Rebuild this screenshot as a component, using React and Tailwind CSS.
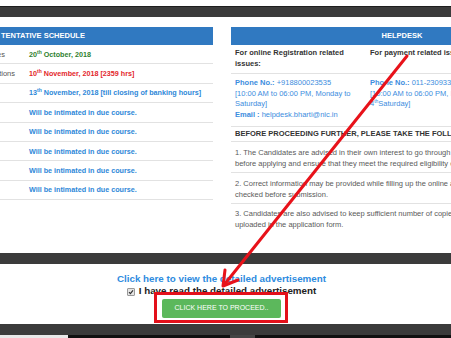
import React from "react";

const font = "font-['Liberation_Sans',Arial,sans-serif]";

function Th({ children }) {
  return <sup className="text-[5px] top-[-3px]">{children}</sup>;
}

const leftRows = [
  { label: "Start of Registration of Candidates", pr: "pr-[24px]", value: <span className="text-[#2f7f2f]">20<Th>th</Th> October, 2018</span> },
  { label: "Closure of Registration of Applications", pr: "pr-[14px]", value: <span className="text-[#e3262b]">10<Th>th</Th> November, 2018 [2359 hrs]</span> },
  { label: "", pr: "", value: <span className="text-[#2d87d8]">13<Th>th</Th> November, 2018 [till closing of banking hours]</span> },
  { label: "", pr: "", value: <span className="text-[#2d87d8]">Will be intimated in due course.</span> },
  { label: "", pr: "", value: <span className="text-[#2d87d8]">Will be intimated in due course.</span> },
  { label: "", pr: "", value: <span className="text-[#2d87d8]">Will be intimated in due course.</span> },
  { label: "", pr: "", value: <span className="text-[#2d87d8]">Will be intimated in due course.</span> },
  { label: "", pr: "", value: <span className="text-[#2d87d8]">Will be intimated in due course.</span> },
];

function LeftTable() {
  return (
    <div className="w-[213px] shrink-0">
      <div className="h-[18px] bg-[#3079c1] flex items-center pl-[1px] text-white font-bold text-[7.5px] whitespace-nowrap">
        TENTATIVE SCHEDULE
      </div>
      {leftRows.map((r, i) => (
        <div key={i} className="h-[19.4px] flex items-center border-b border-[#e2e2e2]">
          <div className="w-[29px] shrink-0 overflow-hidden">
            <div className={`flex justify-end whitespace-nowrap text-[7.5px] text-[#555] ${r.pr}`}>{r.label}</div>
          </div>
          <div className="text-[7.2px] font-bold whitespace-nowrap leading-none">{r.value}</div>
        </div>
      ))}
    </div>
  );
}

function RightTable() {
  return (
    <div className="w-[342px] shrink-0 text-[7.5px] leading-[10.6px]">
      <div className="h-[18px] bg-[#3079c1] flex items-center justify-center text-white font-bold">HELPDESK</div>
      <div className="h-[29px] flex border-b border-[#e2e2e2] font-bold text-[#333] pt-[3px]">
        <div className="w-[135px] px-[4px]">For online Registration related issues:</div>
        <div className="flex-1 px-[4px] whitespace-nowrap">For payment related issues:</div>
      </div>
      <div className="h-[53px] flex border-b border-[#e2e2e2] text-[#3c8dde] pt-[4px]">
        <div className="w-[135px] px-[4px] whitespace-nowrap">
          <b>Phone No.:</b> +918800023535
          <br />[10:00 AM to 06:00 PM, Monday to
          <br />Saturday]
          <br /><b>Email :</b> helpdesk.bharti@nic.in
        </div>
        <div className="flex-1 px-[4px] whitespace-nowrap">
          <b>Phone No.:</b> 011-23093309
          <br />[10:00 AM to 06:00 PM, Monday to Friday except 2nd &amp;
          <br />4<sup className="text-[5px] top-[-3px]">th</sup>Saturday]
        </div>
      </div>
      <div className="h-[15px] flex items-center border-b border-[#e2e2e2] px-[4px] font-bold text-[#333] whitespace-nowrap">
        BEFORE PROCEEDING FURTHER, PLEASE TAKE THE FOLLOWING PRECAUTIONS
      </div>
      <div className="h-[31px] border-b border-[#e2e2e2] px-[4px] pt-[6px] text-[#5a5a5a] whitespace-nowrap">
        1. The Candidates are advised in their own interest to go through the detailed advertisement carefully
        <br />before applying and ensure that they meet the required eligibility criteria.
      </div>
      <div className="h-[31px] border-b border-[#e2e2e2] px-[4px] pt-[6px] text-[#5a5a5a] whitespace-nowrap">
        2. Correct information may be provided while filling up the online application form and it should be
        <br />checked before submission.
      </div>
      <div className="h-[32px] px-[4px] pt-[5px] text-[#5a5a5a] whitespace-nowrap">
        3. Candidates are also advised to keep sufficient number of copies of the photograph
        <br />uploaded in the application form.
      </div>
    </div>
  );
}

export default function App() {
  return (
    <div className={`relative w-[451px] h-[338px] overflow-hidden bg-white ${font}`}>
      <div className="h-[6px] bg-white" />
      <div className="h-[11px] bg-[#3b3b3b] border-t border-[#1e1e1e]" />
      <div className="h-[236px] pt-[10px] flex gap-[18px]">
        <LeftTable />
        <RightTable />
      </div>
      <div className="h-[11px] bg-[#3b3b3b]" />
      <div className="h-[60px] flex flex-col items-center pr-[8px] pt-[8px]">
        <div className="text-[9.8px] leading-[13px] font-bold text-[#2d8be0] whitespace-nowrap">
          Click here to view the detailed advertisement
        </div>
        <div className="flex items-center gap-[4px] h-[13px] text-[9.8px] font-bold text-[#222] whitespace-nowrap">
          <span className="w-[8px] h-[8px] rounded-[1px] border border-[#999] bg-[#e4e4e4] flex items-center justify-center">
            <svg width="6" height="6" viewBox="0 0 6 6">
              <path d="M1 3.2 L2.4 4.6 L5 1.4" stroke="#333" strokeWidth="1.2" fill="none" />
            </svg>
          </span>
          I have read the detailed advertisement
        </div>
        <button className="mt-[0.5px] w-[119px] h-[19px] rounded-[2px] bg-[#5cb85c] text-white text-[7px] flex items-center justify-center whitespace-nowrap">
          CLICK HERE TO PROCEED..
        </button>
      </div>
      <div className="h-[11px] bg-[#3b3b3b]" />
      <div className="h-[3px] flex">
        <div className="w-[68px] bg-[#e8e8e8]" />
        <div className="w-[162px] bg-[#111]" />
        <div className="w-[25px] bg-[#444]" />
        <div className="flex-1 bg-[#111]" />
      </div>

      {/* annotation overlays */}
      <div className="absolute left-[154px] top-[292px] w-[134px] h-[31px] border-[3px] border-[#e3101a]" />
      <svg className="absolute left-0 top-0 pointer-events-none" width="451" height="338" viewBox="0 0 451 338">
        <line x1="407" y1="56" x2="224" y2="285" stroke="#e8121a" strokeWidth="3" strokeLinecap="round" />
        <polyline points="238,280 223,286 225,270" stroke="#e8121a" strokeWidth="3" fill="none" strokeLinecap="round" strokeLinejoin="round" />
      </svg>
    </div>
  );
}
